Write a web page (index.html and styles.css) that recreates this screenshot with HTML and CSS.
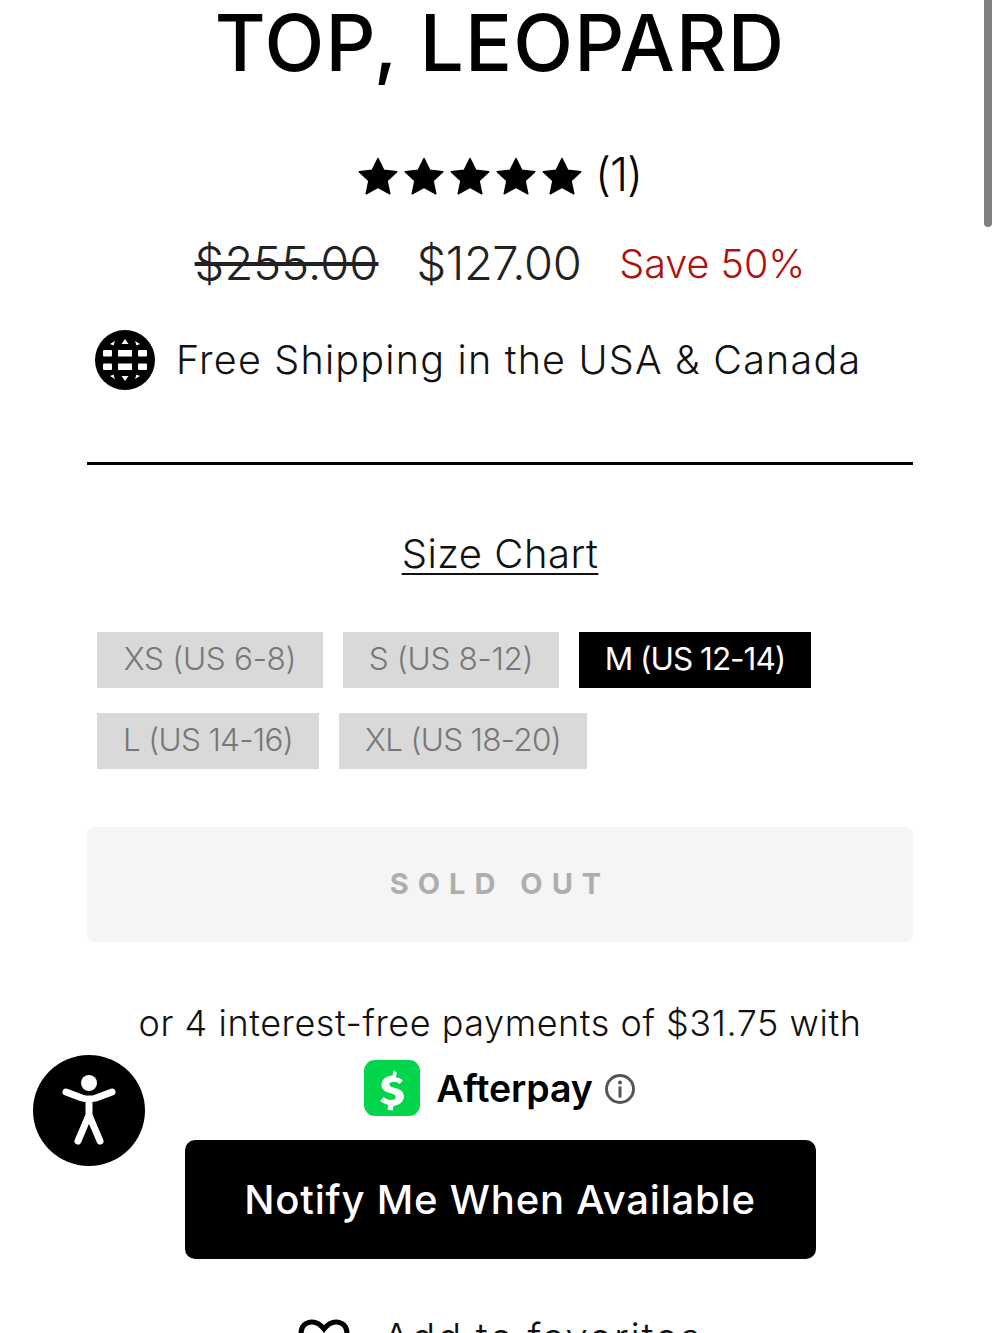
FILE: index.html
```html
<!DOCTYPE html>
<html lang="en">
<head>
<meta charset="utf-8">
<title>Top, Leopard</title>
<link rel="stylesheet" href="styles.css">
</head>
<body>
<main class="product">
  <h1 class="title">TOP, LEOPARD</h1>
  <div class="rating">
    <svg class="stars" viewBox="0 0 224 40" aria-hidden="true">
      <defs><path id="star" d="M20 2.500 L25.800 14.300 L38.800 15.800 L29.100 24.800 L31.800 37.800 L20 31.300 L8.200 37.800 L10.900 24.800 L1.200 15.800 L14.200 14.300 Z" stroke="#000" stroke-width="1.500" stroke-linejoin="round"/></defs>
      <use href="#star" x="0"/><use href="#star" x="46"/><use href="#star" x="92"/><use href="#star" x="138"/><use href="#star" x="184"/>
    </svg>
    <span class="count">(1)</span>
  </div>
  <div class="prices">
    <s class="old">$255.00</s>
    <span class="now">$127.00</span>
    <span class="save">Save 50%</span>
  </div>
  <div class="shipping">
    <svg class="globe" viewBox="0 0 60 60" aria-hidden="true">
      <circle cx="30" cy="30" r="30" fill="#000"/>
      <g fill="#fff">
        <path d="M30 9l3.500 5h-7z"/><path d="M30 51l3.500-5h-7z"/>
        <path d="M15 14l5-3-1.500 4.500zM45 14l-5-3 1.500 4.500zM15 46l5 3-1.500-4.500zM45 46l-5 3 1.500-4.500z"/>
        <rect x="8" y="20" width="9" height="6.500" rx="1"/><rect x="23" y="20" width="14" height="6.500"/><rect x="43" y="20" width="9" height="6.500" rx="1"/>
        <rect x="8" y="33.500" width="9" height="6.500" rx="1"/><rect x="23" y="33.500" width="14" height="6.500"/><rect x="43" y="33.500" width="9" height="6.500" rx="1"/>
      </g>
    </svg>
    <span>Free Shipping in the USA &amp; Canada</span>
  </div>
  <hr class="rule">
  <a class="chart" href="#">Size Chart</a>
  <div class="sizes">
    <span class="size w-xs">XS (US 6-8)</span>
    <span class="size w-s">S (US 8-12)</span>
    <span class="size active w-m">M (US 12-14)</span>
    <span class="size tight w-l">L (US 14-16)</span>
    <span class="size tight w-xl">XL (US 18-20)</span>
  </div>
  <div class="soldout">SOLD OUT</div>
  <p class="afterpay">or 4 interest-free payments of $31.75 with</p>
  <div class="cash">
    <svg class="cash-logo" viewBox="0 0 56 56" aria-hidden="true">
      <rect width="56" height="56" rx="11" fill="#00d54b"/>
      <path d="M29.500 10.500l-1 5c-1 0-2 .1-3 .4-5 1.300-8 4.600-8 9 0 4.600 3.300 6.900 9 8.400 3.800 1 5.300 2 5.300 3.600 0 1.800-1.900 3-4.800 3-2.700 0-5.300-1-7.300-2.900l-3.500 3.800c2.200 2.100 5 3.400 8.200 3.900l-1 4.800 5.200 1 1-4.800c6.200-.6 10.300-4.100 10.300-9.300 0-4.700-3.100-7-8.800-8.500-4-1.100-5.700-1.900-5.700-3.500 0-1.500 1.700-2.600 4.100-2.600 2.200 0 4.400.8 6.100 2.300l3.300-3.900c-1.900-1.500-4.300-2.600-7-3l1-4.700z" fill="#fff"/>
    </svg>
    <span class="cash-name">Afterpay</span>
    <svg class="info" viewBox="0 0 32 32" aria-hidden="true">
      <circle cx="16" cy="16" r="13.500" fill="none" stroke="#555" stroke-width="3"/>
      <circle cx="16" cy="9.500" r="2" fill="#555"/>
      <rect x="14.500" y="13.500" width="3" height="11" fill="#555"/>
    </svg>
  </div>
  <button class="notify" type="button">Notify Me When Available</button>
  <div class="favorites">
    <svg class="heart" viewBox="0 0 52 44" aria-hidden="true">
      <path d="M26 40C12 30 3 23 3 14 3 7 8 3 14 3c5 0 9 3 12 7 3-4 7-7 12-7 6 0 11 4 11 11 0 9-9 16-23 26z" fill="none" stroke="#000" stroke-width="5"/>
    </svg>
    <span class="fav-label">Add to favorites</span>
  </div>
</main>
<div class="scrollbar"></div>
<button class="a11y" type="button" aria-label="Accessibility">
  <svg viewBox="0 0 112 111" aria-hidden="true">
    <circle cx="56" cy="28" r="8" fill="#fff"/>
    <path d="M33 37L49 43Q56 45 63 43L79 37M56 44V62M56 60L45 86M56 60L67 86" fill="none" stroke="#fff" stroke-width="7" stroke-linecap="round" stroke-linejoin="round"/>
  </svg>
</button>
</body>
</html>
```
FILE: styles.css
```css
* { box-sizing: border-box; }
html, body { margin: 0; height: 1333px; overflow: hidden; background: #fff; }
body { font-family: Inter, "Liberation Sans", sans-serif; color: #000; position: relative; }

.product { padding: 0 87px; display: flex; flex-direction: column; align-items: center; }

.title { margin: 0; height: 86px; font-size: 78px; line-height: 86px; font-weight: 500; white-space: nowrap; letter-spacing: 1.200px; }

.rating { margin-top: 60px; height: 56px; display: flex; align-items: center; gap: 13px; }
.stars { width: 224px; height: 40px; margin-top: 4px; }
.count { font-size: 46px; font-weight: 300; letter-spacing: -1px; }

.prices { margin-top: 32px; height: 56px; display: flex; align-items: center; gap: 38px; font-size: 47px; font-weight: 300; color: #222; white-space: nowrap; }
.old { letter-spacing: .1px; }
.now { letter-spacing: -.4px; }
.save { color: #b01010; font-size: 39.500px; margin-top: 4px; }

.shipping { margin-top: 39px; height: 62px; align-self: stretch; display: flex; align-items: center; gap: 21px; padding-left: 8px; font-size: 39.500px; font-weight: 300; color: #111; white-space: nowrap; letter-spacing: 1.200px; }
.globe { width: 60px; height: 60px; flex: none; }

.rule { margin: 71px 0 0; align-self: stretch; border: 0; height: 3px; background: #000; }

.chart { margin-top: 64px; height: 50px; line-height: 50px; font-size: 40px; font-weight: 300; color: #111; letter-spacing: .5px; text-decoration: underline; text-decoration-thickness: 2px; text-underline-offset: 5px; }

.sizes { margin-top: 53px; align-self: stretch; padding-left: 10px; display: flex; flex-wrap: wrap; gap: 25px 20px; }
.size { height: 56px; padding-bottom: 3px; display: flex; align-items: center; justify-content: center; font-size: 31.500px; font-weight: 300; color: #777; background: #d9d9d9; white-space: nowrap; letter-spacing: -.3px; }
.tight { letter-spacing: -.7px; }
.w-xs { width: 226px; }
.w-s { width: 216px; }
.w-m { width: 232px; }
.w-l { width: 222px; }
.w-xl { width: 248px; }
.size.active { background: #000; color: #fff; font-weight: 400; letter-spacing: -1px; }

.soldout { margin-top: 58px; align-self: stretch; height: 115px; display: flex; align-items: center; justify-content: center; background: #f5f5f5; border-radius: 8px; font-size: 29px; font-weight: 700; color: #aeaeae; letter-spacing: 9px; padding-bottom: 2px; }

.afterpay { margin: 59px 0 0; height: 44px; line-height: 44px; font-size: 36px; font-weight: 300; color: #111; white-space: nowrap; letter-spacing: .55px; }

.cash { margin-top: 14px; height: 58px; display: flex; align-items: center; gap: 16px; }
.cash-logo { width: 56px; height: 56px; flex: none; }
.cash-name { font-size: 37.500px; font-weight: 600; letter-spacing: -.1px; margin-right: -5px; }
.info { width: 32px; height: 32px; flex: none; margin-top: 2px; }

.notify { margin-top: 23px; width: 631px; height: 119px; background: #000; color: #fff; border: 0; border-radius: 10px; font-family: inherit; font-size: 40px; font-weight: 500; letter-spacing: .8px; }

.favorites { margin-top: 57px; display: flex; align-items: center; gap: 33px; font-size: 40px; font-weight: 300; color: #111; height: 50px; white-space: nowrap; letter-spacing: 1.700px; }
.fav-label { padding-bottom: 8px; }
.heart { width: 52px; height: 44px; flex: none; }

.scrollbar { position: absolute; top: -10px; left: 984px; width: 8px; height: 237px; border-radius: 4px; background: #808080; }

.a11y { position: absolute; left: 33px; top: 1055px; width: 112px; height: 111px; padding: 0; border: 0; border-radius: 50%; background: #000; display: flex; }
.a11y svg { width: 112px; height: 111px; }
```
